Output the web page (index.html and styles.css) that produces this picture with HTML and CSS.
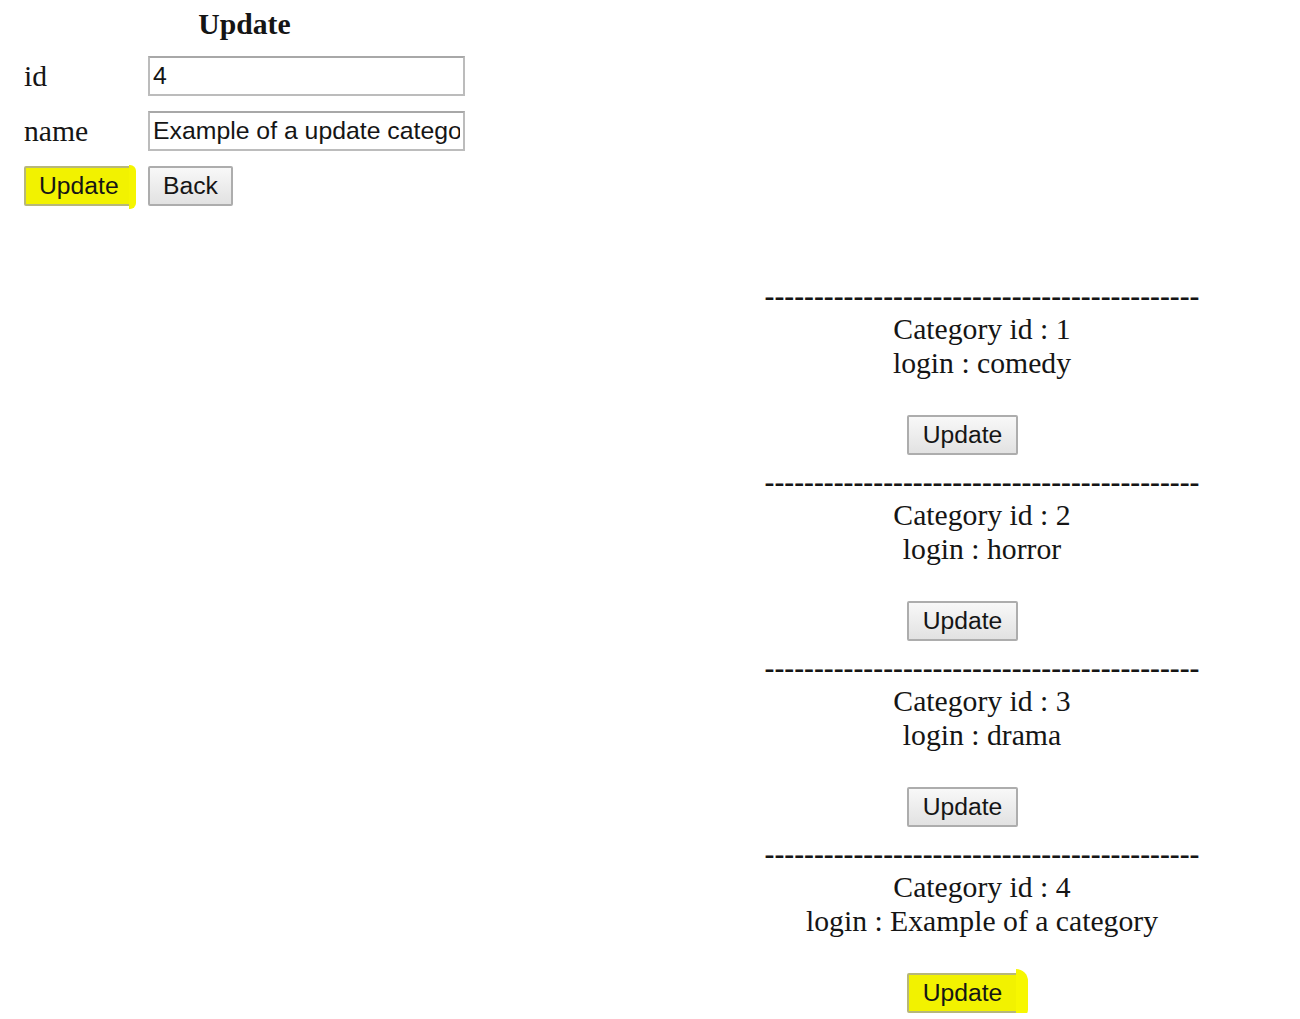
FILE: index.html
```html
<!DOCTYPE html>
<html>
<head>
<meta charset="utf-8">
<link rel="stylesheet" href="styles.css">
</head>
<body>
<div class="page">
  <form class="form">
    <div class="title">Update</div>
    <div class="row">
      <label class="label">id</label>
      <input class="field" type="text" value="4">
    </div>
    <div class="row">
      <label class="label">name</label>
      <input class="field" type="text" value="Example of a update category">
    </div>
    <div class="row buttons">
      <div class="cell"><button type="button" class="btn marked marked-top">Update</button></div>
      <button type="button" class="btn">Back</button>
    </div>
  </form>
  <div class="list">
    <div class="item">
      <div class="dashes">--------------------------------------------</div>
      <div class="line">Category id : 1</div>
      <div class="line line2">login : comedy</div>
      <div class="btnrow"><button type="button" class="btn">Update</button></div>
    </div>
    <div class="item">
      <div class="dashes">--------------------------------------------</div>
      <div class="line">Category id : 2</div>
      <div class="line line2">login : horror</div>
      <div class="btnrow"><button type="button" class="btn">Update</button></div>
    </div>
    <div class="item">
      <div class="dashes">--------------------------------------------</div>
      <div class="line">Category id : 3</div>
      <div class="line line2">login : drama</div>
      <div class="btnrow"><button type="button" class="btn">Update</button></div>
    </div>
    <div class="item">
      <div class="dashes">--------------------------------------------</div>
      <div class="line">Category id : 4</div>
      <div class="line line2">login : Example of a category</div>
      <div class="btnrow"><button type="button" class="btn marked marked-bottom">Update</button></div>
    </div>
  </div>
</div>
</body>
</html>
```

FILE: styles.css
```css
html, body {
  margin: 0;
  padding: 0;
  background: #ffffff;
  overflow: hidden;
}

body {
  font-family: "Liberation Serif", "Times New Roman", serif;
  font-size: 29.7px;
  color: #151515;
}

.page {
  display: flex;
  justify-content: space-between;
  align-items: flex-start;
  padding: 0 100px 0 24px;
}

.form {
  width: 441px;
  margin: 0;
  padding-top: 8px;
}

.title {
  font-weight: bold;
  text-align: center;
  line-height: 33px;
  margin-bottom: 15px;
}

.row {
  display: flex;
  align-items: center;
  height: 40px;
  margin-bottom: 15px;
}

.label {
  width: 124px;
  line-height: 33px;
}

.field {
  box-sizing: border-box;
  width: 317px;
  height: 40px;
  margin: 0;
  padding: 0 3px;
  border: 2px solid #bcbcbc;
  border-top-color: #a8a8a8;
  font-family: "Liberation Sans", Arial, sans-serif;
  font-size: 24.8px;
  color: #151515;
  background: #ffffff;
  outline: none;
}

.cell {
  width: 124px;
}

.btn {
  box-sizing: border-box;
  height: 40px;
  margin: 0;
  padding: 0 12px;
  border: 2px solid #adadad;
  border-radius: 2px;
  background: linear-gradient(#f8f8f8, #e2e2e2);
  font-family: "Liberation Sans", Arial, sans-serif;
  font-size: 24.7px;
  color: #151515;
  line-height: 34px;
}

.buttons .btn {
  padding: 0 13px;
}

.marked {
  position: relative;
  background: #f2f200;
  border-color: #b7b77a;
}

.marked-top {
  width: 109px;
}

.marked-top::after {
  content: "";
  position: absolute;
  right: -5px;
  top: -3px;
  width: 7px;
  height: 44px;
  background: #f5f500;
  border-radius: 0 6px 6px 0;
}

.marked-bottom::after {
  content: "";
  position: absolute;
  right: -12px;
  top: -6px;
  width: 12px;
  height: 49px;
  background: #f7f700;
  border-radius: 0 14px 10px 0;
}

.list {
  width: 436px;
  margin-top: 280px;
  text-align: center;
}

.item + .item {
  margin-top: 11px;
}

.dashes {
  font-weight: bold;
  line-height: 33px;
  white-space: nowrap;
  overflow: hidden;
}

.line {
  line-height: 33px;
  white-space: nowrap;
}

.line2 {
  padding-top: 1px;
}

.btnrow {
  display: flex;
  justify-content: center;
  padding-top: 35px;
  padding-right: 39px;
}

.btnrow .btn {
  width: 111px;
}
```
